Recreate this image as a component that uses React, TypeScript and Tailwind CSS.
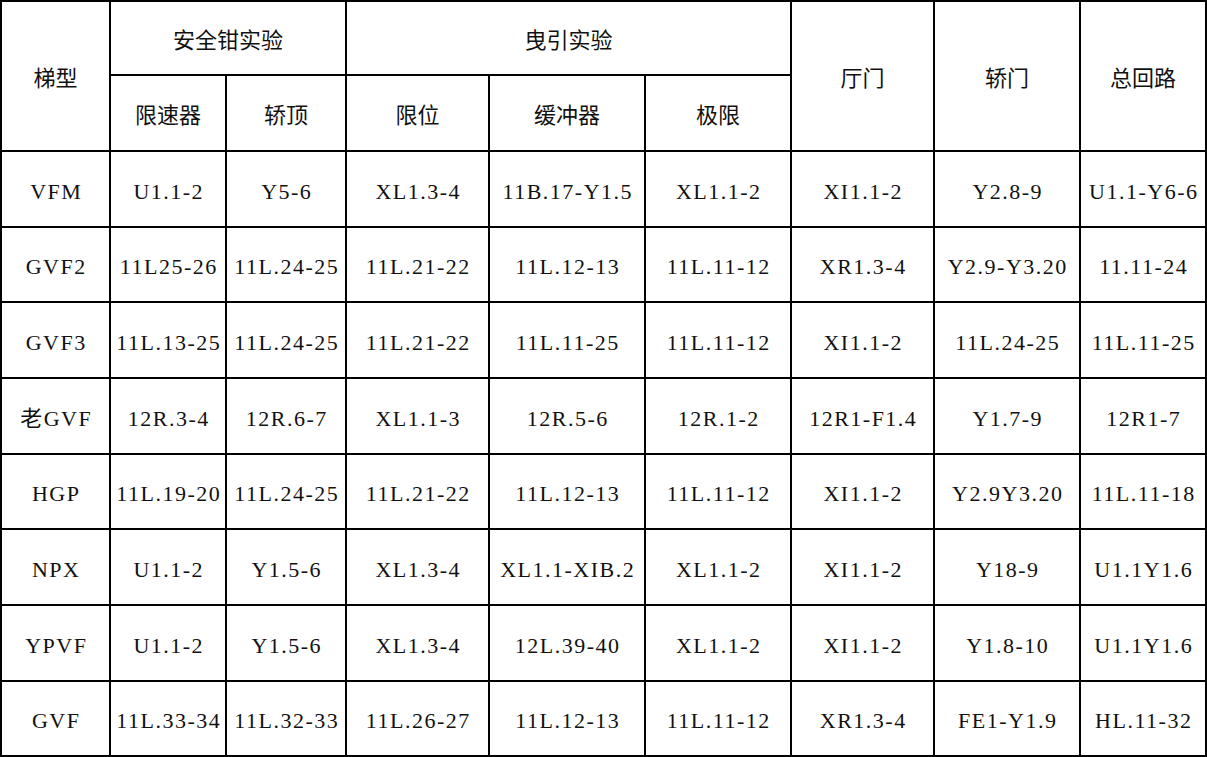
type Row = {
  model: string;
  cells: string[];
};

const rows: Row[] = [
  { model: "VFM", cells: ["U1.1-2", "Y5-6", "XL1.3-4", "11B.17-Y1.5", "XL1.1-2", "XI1.1-2", "Y2.8-9", "U1.1-Y6-6"] },
  { model: "GVF2", cells: ["11L25-26", "11L.24-25", "11L.21-22", "11L.12-13", "11L.11-12", "XR1.3-4", "Y2.9-Y3.20", "11.11-24"] },
  { model: "GVF3", cells: ["11L.13-25", "11L.24-25", "11L.21-22", "11L.11-25", "11L.11-12", "XI1.1-2", "11L.24-25", "11L.11-25"] },
  { model: "老GVF", cells: ["12R.3-4", "12R.6-7", "XL1.1-3", "12R.5-6", "12R.1-2", "12R1-F1.4", "Y1.7-9", "12R1-7"] },
  { model: "HGP", cells: ["11L.19-20", "11L.24-25", "11L.21-22", "11L.12-13", "11L.11-12", "XI1.1-2", "Y2.9Y3.20", "11L.11-18"] },
  { model: "NPX", cells: ["U1.1-2", "Y1.5-6", "XL1.3-4", "XL1.1-XIB.2", "XL1.1-2", "XI1.1-2", "Y18-9", "U1.1Y1.6"] },
  { model: "YPVF", cells: ["U1.1-2", "Y1.5-6", "XL1.3-4", "12L.39-40", "XL1.1-2", "XI1.1-2", "Y1.8-10", "U1.1Y1.6"] },
  { model: "GVF", cells: ["11L.33-34", "11L.32-33", "11L.26-27", "11L.12-13", "11L.11-12", "XR1.3-4", "FE1-Y1.9", "HL.11-32"] },
];

const head = "flex items-center justify-center bg-white text-[22px] text-[#111] [font-family:'Noto_Sans_CJK_SC',sans-serif]";
const cell =
  "flex items-center justify-center bg-white whitespace-nowrap pt-[4px] pl-[1.5px] text-[22px] tracking-[1.5px] text-[#111] [font-family:'Liberation_Serif','Noto_Sans_CJK_SC',serif]";

export default function App() {
  return (
    <div className="w-[1207px] h-[757px] bg-white">
      <div className="grid h-full w-full gap-[2px] bg-black p-[2px] grid-cols-[107px_114px_118px_141px_154px_144px_141px_144px_124px] grid-rows-[72px_74px_74px_73px_74px_74px_73px_74px_74px_73px]">
        {/* header */}
        <div className={`${head} row-span-2`}>梯型</div>
        <div className={`${head} col-span-2`}>安全钳实验</div>
        <div className={`${head} col-span-3`}>曳引实验</div>
        <div className={`${head} row-span-2`}>厅门</div>
        <div className={`${head} row-span-2`}>轿门</div>
        <div className={`${head} row-span-2`}>总回路</div>
        <div className={head}>限速器</div>
        <div className={head}>轿顶</div>
        <div className={head}>限位</div>
        <div className={head}>缓冲器</div>
        <div className={head}>极限</div>

        {/* body */}
        {rows.map((row) => (
          <RowCells key={row.model} row={row} />
        ))}
      </div>
    </div>
  );
}

function RowCells({ row }: { row: Row }) {
  return (
    <>
      <div className={cell}>{row.model}</div>
      {row.cells.map((c, i) => (
        <div key={i} className={cell}>
          {c}
        </div>
      ))}
    </>
  );
}
